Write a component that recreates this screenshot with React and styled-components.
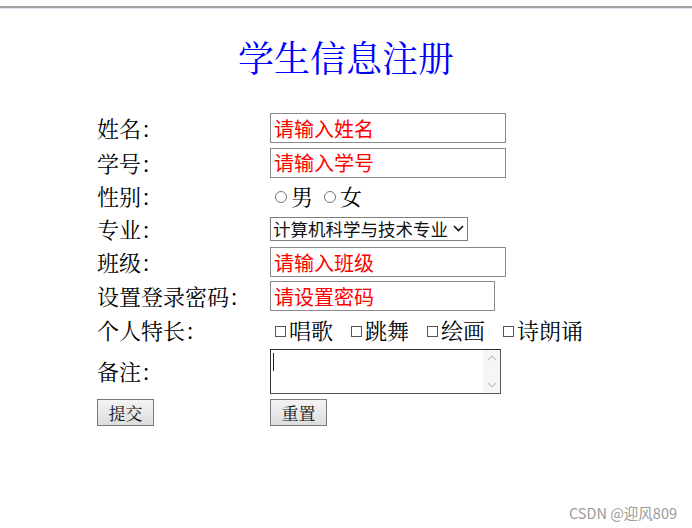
import React from 'react';
import styled, { createGlobalStyle } from 'styled-components';

const GlobalStyle = createGlobalStyle`
    html, body {
        margin: 0;
        padding: 0;
        background: #ffffff;
    }
    body {
        font-family: "Noto Serif CJK SC", "Liberation Serif", "Noto Sans CJK SC", serif;
    }
`;

const Page = styled.div`
    min-height: 100vh;
    display: flex;
    flex-direction: column;
    box-sizing: border-box;
`;

const TopEdge = styled.div`
    height: 6px;
    border-bottom: 2px solid #a2a2a2;
    box-shadow: 0 1px 0 #dbe5f3;
`;

const Title = styled.h1`
    margin: 29px 0 0;
    text-align: center;
    color: #0000ff;
    font-size: 36px;
    font-weight: normal;
    line-height: 40px;
    font-family: "Noto Serif CJK SC", "Liberation Serif", "Noto Sans CJK SC", serif;
`;

const Form = styled.form`
    margin-top: 34px;
    display: grid;
    justify-content: center;
    grid-template-columns: 173px 325px;
    grid-template-rows: 34px 35px 32px 34px 32px 36px 32px 50px 32px;
    align-items: center;
`;

const Label = styled.label`
    font-size: 22px;
    line-height: 28px;
    color: #000;
    white-space: nowrap;
`;

const TextInput = styled.input`
    box-sizing: border-box;
    width: ${props => props.$width}px;
    height: 30px;
    margin: 0;
    padding: 0 3px;
    border: 1px solid #8a8a8a;
    border-radius: 0;
    outline: none;
    font-family: "Noto Sans CJK SC", "Liberation Sans", sans-serif;
    font-size: 20px;
    color: #111;

    &::placeholder {
        color: #ff0000;
        opacity: 1;
    }
`;

const SelectWrap = styled.div`
    position: relative;
    width: 198px;
    height: 24px;
`;

const Select = styled.select`
    appearance: none;
    box-sizing: border-box;
    width: 100%;
    height: 100%;
    margin: 0;
    padding: 0 18px 0 2px;
    border: 1px solid #7f7f7f;
    border-radius: 0;
    background: #ffffff;
    color: #111;
    font-family: "Noto Sans CJK SC", "Liberation Sans", sans-serif;
    font-size: 17.5px;
    line-height: 22px;
    outline: none;
`;

const SelectArrow = styled.svg`
    position: absolute;
    right: 4px;
    top: 8px;
    pointer-events: none;
`;

const ChoiceGroup = styled.div`
    display: flex;
    align-items: center;
    white-space: nowrap;
    font-size: 22px;
    line-height: 28px;
    color: #000;
`;

const Choice = styled.label`
    display: inline-flex;
    flex-shrink: 0;
    align-items: center;
    margin-right: ${props => props.$gap}px;
`;

const Radio = styled.input.attrs({ type: 'radio' })`
    appearance: none;
    box-sizing: border-box;
    width: 12px;
    height: 12px;
    margin: 2px 4px 0 5px;
    border: 1px solid #777;
    border-radius: 50%;
    background: #fff;
`;

const Checkbox = styled.input.attrs({ type: 'checkbox' })`
    appearance: none;
    box-sizing: border-box;
    width: 11px;
    height: 11px;
    margin: 2px 3px 0 5px;
    border: 1px solid #555;
    border-radius: 0;
    background: #fff;
`;

const NoteBox = styled.div`
    position: relative;
    width: 231px;
    height: 45px;
`;

const TextArea = styled.textarea`
    box-sizing: border-box;
    width: 100%;
    height: 100%;
    margin: 0;
    padding: 2px 22px 2px 3px;
    border: 1px solid #2e2e2e;
    border-right-color: #555;
    border-bottom-color: #555;
    border-radius: 0;
    resize: none;
    outline: none;
    overflow: hidden;
    font-family: "Noto Sans CJK SC", "Liberation Sans", sans-serif;
    font-size: 16px;
`;

const Caret = styled.span`
    position: absolute;
    left: 3px;
    top: 4px;
    width: 1px;
    height: 18px;
    background: #222;
`;

const ScrollTrack = styled.div`
    position: absolute;
    top: 1px;
    right: 1px;
    bottom: 1px;
    width: 17px;
    background: #f6f6f6;
    display: flex;
    flex-direction: column;
    justify-content: space-between;
    align-items: center;
    padding: 4px 0;
    box-sizing: border-box;
`;

const Button = styled.button`
    box-sizing: border-box;
    width: 57px;
    height: 27px;
    margin: 0;
    padding: 0;
    border: 1px solid #7a7a7a;
    border-radius: 0;
    background: linear-gradient(#f4f4f4, #dddddd);
    color: #111;
    font-family: "Noto Serif CJK SC", "Liberation Serif", "Noto Sans CJK SC", serif;
    font-size: 17px;
    line-height: 25px;
`;

const Footer = styled.div`
    margin-top: auto;
    padding: 0 15px 6px 0;
    text-align: right;
    font-family: "Noto Sans CJK SC", "Liberation Sans", sans-serif;
    font-size: 14.5px;
    line-height: 19px;
    color: #9a9a9a;
`;

const Chevron = ({ up }) => (
    <svg width="10" height="7" viewBox="0 0 10 7">
        <path
            d={up ? 'M1 6 L5 2 L9 6' : 'M1 1 L5 5 L9 1'}
            fill="none"
            stroke="#c2c2c2"
            strokeWidth="1.2"
        />
    </svg>
);

const hobbies = ['唱歌', '跳舞', '绘画', '诗朗诵'];

function App() {
    return (
        <Page>
            <GlobalStyle />
            <TopEdge />
            <Title>学生信息注册</Title>
            <Form onSubmit={e => e.preventDefault()}>
                <Label>姓名：</Label>
                <TextInput $width={236} placeholder="请输入姓名" />

                <Label>学号：</Label>
                <TextInput $width={236} placeholder="请输入学号" />

                <Label>性别：</Label>
                <ChoiceGroup>
                    <Choice $gap={6}><Radio name="sex" />男</Choice>
                    <Choice $gap={0}><Radio name="sex" />女</Choice>
                </ChoiceGroup>

                <Label>专业：</Label>
                <SelectWrap>
                    <Select defaultValue="cs">
                        <option value="cs">计算机科学与技术专业</option>
                        <option value="se">软件工程专业</option>
                        <option value="net">网络工程专业</option>
                    </Select>
                    <SelectArrow width="11" height="7" viewBox="0 0 11 7">
                        <path d="M1 1 L5.5 5.5 L10 1" fill="none" stroke="#111" strokeWidth="1.6" />
                    </SelectArrow>
                </SelectWrap>

                <Label>班级：</Label>
                <TextInput $width={236} placeholder="请输入班级" />

                <Label>设置登录密码：</Label>
                <TextInput $width={225} type="password" placeholder="请设置密码" />

                <Label>个人特长：</Label>
                <ChoiceGroup>
                    {hobbies.map(h => (
                        <Choice key={h} $gap={13}><Checkbox />{h}</Choice>
                    ))}
                </ChoiceGroup>

                <Label>备注：</Label>
                <NoteBox>
                    <TextArea />
                    <Caret />
                    <ScrollTrack>
                        <Chevron up />
                        <Chevron />
                    </ScrollTrack>
                </NoteBox>

                <div><Button type="submit">提交</Button></div>
                <div><Button type="reset">重置</Button></div>
            </Form>
            <Footer>CSDN @迎风809</Footer>
        </Page>
    );
}

export default App;
